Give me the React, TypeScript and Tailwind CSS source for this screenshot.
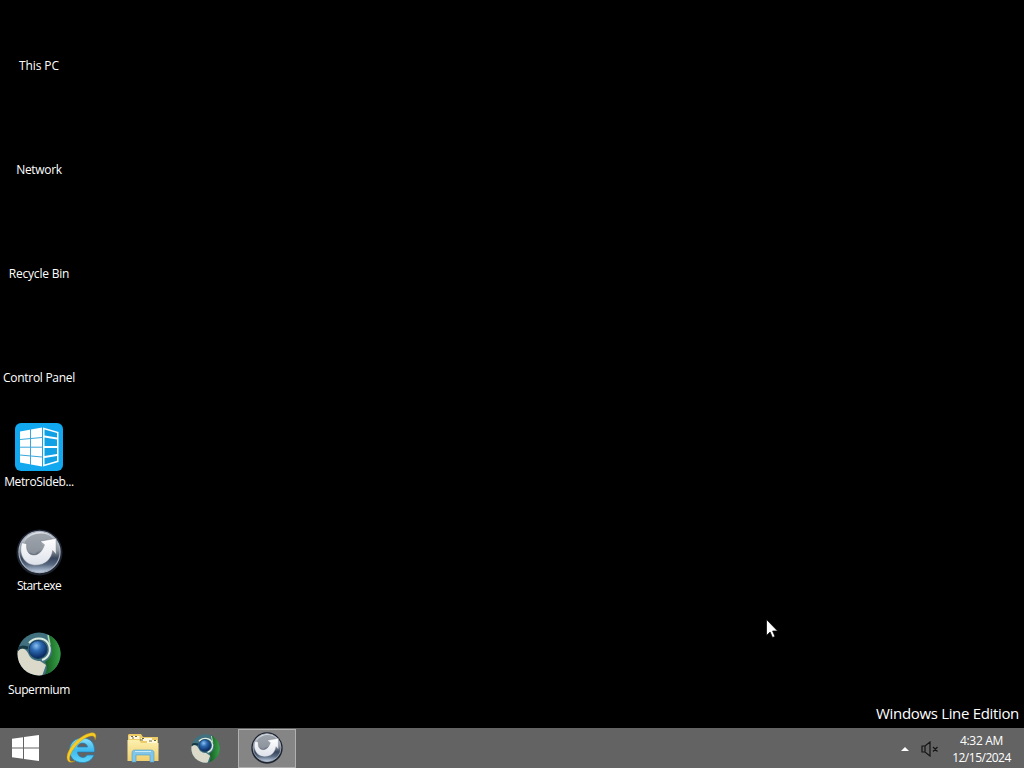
import { ReactNode } from "react";
import clsx from "clsx";

function MetroIcon() {
  return (
    <svg viewBox="0 0 48 48" className="size-12">
      <rect width="48" height="48" rx="6" fill="#12a8f0" />
      <path d="M5 8.500 27 4.500v39L5 39.500z" fill="#fff" />
      <path
        d="M5 16.500 27 14.500M5 24.200h22M5 32 27 34M15.500 6v36"
        stroke="#3aa5d8"
        strokeWidth="1"
      />
      <path
        d="M28 4.500 43.500 9v30L28 43.500z"
        fill="#fff"
      />
      <path
        d="M29.500 6.500 42 10v4.500l-12.500-2zM29.500 14.500 42 16.500v6.500H29.500zM29.500 25H42v6l-12.500 2zM29.500 35 42 33v4.800l-12.500 3.700z"
        fill="#12a0e4"
      />
    </svg>
  );
}

function StartOrb({ className, id }: { className: string; id: string }) {
  return (
    <svg viewBox="0 0 48 48" className={className}>
      <defs>
        <linearGradient id={`${id}-glass`} x1="0" y1="0" x2="0" y2="1">
          <stop offset="0" stopColor="#e3e6ea" />
          <stop offset="0.45" stopColor="#8d949d" />
          <stop offset="0.65" stopColor="#38455c" />
          <stop offset="0.8" stopColor="#56677f" />
          <stop offset="1" stopColor="#c3d2e6" />
        </linearGradient>
        <linearGradient id={`${id}-arrow`} x1="0" y1="0" x2="0" y2="1">
          <stop offset="0" stopColor="#fff" />
          <stop offset="1" stopColor="#dde1ea" />
        </linearGradient>
      </defs>
      <circle cx="24" cy="24" r="23.500" fill="#1d2430" />
      <circle
        cx="24"
        cy="23.500"
        r="21"
        fill={`url(#${id}-glass)`}
        stroke="#a9b2c0"
        strokeWidth="1.200"
      />
      <path d="M9 13C15 3 32 2 38 10L25 13l3 4-9 9-8-3z" fill="#90969f" opacity="0.8" />
      <path
        d="M6 14C2 26 9 37 20 37c10 0 16-6 17.500-15L41 26V9.500L24.500 12.500 29 16c-2 6-5 10-10 10.500C13 27 10 22 11 15z"
        fill={`url(#${id}-arrow)`}
        stroke="#69717e"
        strokeWidth="0.5"
      />
    </svg>
  );
}

function SupermiumIcon({ className, id }: { className: string; id: string }) {
  return (
    <svg viewBox="0 0 44 44" className={className}>
      <defs>
        <radialGradient id={`${id}-eye`} cx="0.4" cy="0.3" r="0.7">
          <stop offset="0" stopColor="#8ac0f2" />
          <stop offset="0.4" stopColor="#2c69b1" />
          <stop offset="1" stopColor="#07265b" />
        </radialGradient>
        <linearGradient id={`${id}-green`}>
          <stop offset="0" stopColor="#14571e" />
          <stop offset="1" stopColor="#37a447" />
        </linearGradient>
        <clipPath id={`${id}-clip`}>
          <circle cx="22" cy="22" r="21.500" />
        </clipPath>
      </defs>
      <g clipPath={`url(#${id}-clip)`}>
        <path d="M0 0h44v44H0z" fill="#41717f" />
        <path d="M0 18c5-3 9-1 11 3 2 6 7 8 12 8l6 4-4 11H0z" fill="#dad9ca" />
        <path
          d="M30 0h14v44H27c3-5 4-9 1-14 7-4 9-11 5-18z"
          fill={`url(#${id}-green)`}
        />
        <path d="M0 18c3-4 7-3 11-2" fill="none" stroke="#173944" strokeWidth="3" />
        <path
          d="M12 11c5-6 15-6 19 0 4 7 1 15-6 17"
          fill="none"
          stroke="#dcebe0"
          strokeWidth="2"
        />
        <path d="M31 3l2 10" stroke="#b4d6ba" strokeWidth="1.500" />
      </g>
      <circle cx="21" cy="17.500" r="9" fill={`url(#${id}-eye)`} stroke="#163a61" />
    </svg>
  );
}

function WindowsLogo() {
  return (
    <svg viewBox="0 0 27 26" className="h-[26px] w-[27px]" fill="#fff">
      <path d="M0 3.700 11 2.200v10.300H0zM12 2 27 0v12.500H12zM0 13.500h11v10.300L0 22.300zM12 13.500h15V26l-15-2z" />
    </svg>
  );
}

function ExplorerE() {
  return (
    <svg viewBox="0 0 32 32" className="size-8">
      <defs>
        <linearGradient id="ie-blue" x1="0" y1="0" x2="0" y2="1">
          <stop offset="0" stopColor="#8be1fa" />
          <stop offset="0.5" stopColor="#3db9ed" />
          <stop offset="1" stopColor="#5fd6fa" />
        </linearGradient>
      </defs>
      <path
        d="M29.500 20H12.500c0 6 8 7 9.500 3h7c-2 5-6 7.500-11.500 7.500C9 30.500 4.500 25 4.500 18S10 6 17.500 6c8 0 12.500 5 12 14zM12.500 15h10c-.5-5-9-5.500-10 0z"
        fill="url(#ie-blue)"
        fillRule="evenodd"
        stroke="#1f7fb8"
        strokeWidth="0.7"
      />
      <path
        d="M3.500 29.500C-1 25 5 14 13 7.500 20 2 28-1 30.300 2c1 1.300.7 3.500-.3 6 .2-3-1-4.500-4-4-5 .8-11 5-15.500 10.500C6 20 3.500 25.500 5 28.500c.7 1.300 3 1.200 5 .3-2.500 1.700-5 2-6.500.7z"
        fill="#f7cd24"
        stroke="#c18b13"
        strokeWidth="0.4"
      />
    </svg>
  );
}

function FolderIcon() {
  return (
    <svg viewBox="0 0 32 30" className="h-[30px] w-8">
      <defs>
        <linearGradient id="folder-front" x1="0" y1="0" x2="0" y2="1">
          <stop offset="0" stopColor="#fcf0ae" />
          <stop offset="1" stopColor="#f0cf6f" />
        </linearGradient>
      </defs>
      <path d="M1 28V2l1-1h12l2 3h15v24z" fill="#edcc68" />
      <path d="M2.500 3h10v3h-10zM14 5h11v3H14zM20 7h10v3H20z" fill="#fff8dc" />
      <path
        d="M4 3.500h2M8 3.500h2M5 5h2M15 5.500h2M13 7h3M22 8h3M27 7.500h2"
        stroke="#6b6841"
      />
      <path d="M.5 28V7H12l2 3h17.500v18z" fill="url(#folder-front)" />
      <path
        d="M5 29v-9c0-2 1-3 3-3h16c2 0 3 1 3 3v9h-4v-7H9v7z"
        fill="#82c5e7"
        stroke="#4f9fca"
        strokeWidth="0.6"
      />
      <path d="M8 18.500h16" stroke="#c8edf9" />
    </svg>
  );
}

function MutedSpeaker() {
  return (
    <svg
      viewBox="0 0 18 16"
      className="h-4 w-[18px]"
      fill="none"
      stroke="#151515"
      strokeWidth="1.200"
    >
      <path d="M1 5h3l5-4v14l-5-4H1zM4 5v6M12 6l4.500 4.500M16.500 6 12 10.500" />
    </svg>
  );
}

const shortcuts: { name: string; label: string; icon?: ReactNode }[] = [
  { name: "This PC", label: "tracking-[-0.1px]" },
  { name: "Network", label: "tracking-[-0.3px]" },
  { name: "Recycle Bin", label: "tracking-[-0.2px]" },
  { name: "Control Panel", label: "tracking-[-0.3px]" },
  { name: "MetroSideb...", label: "tracking-[-0.36px]", icon: <MetroIcon /> },
  {
    name: "Start.exe",
    label: "tracking-[-0.6px]",
    icon: <StartOrb id="desk-orb" className="mt-0.5 size-[47px]" />,
  },
  {
    name: "Supermium",
    label: "tracking-[-0.4px]",
    icon: <SupermiumIcon id="desk-sm" className="mb-0.5 size-11" />,
  },
];

function TaskButton({ children, active }: { children: ReactNode; active?: boolean }) {
  return (
    <div className="flex h-10 w-[62px] items-center justify-center">
      <div
        className={clsx(
          "flex h-[39px] w-[58px] items-center justify-center",
          active && "border border-[#b0b0b0] bg-[#858585]"
        )}
      >
        {children}
      </div>
    </div>
  );
}

function Taskbar() {
  return (
    <div className="flex h-10 shrink-0 items-center bg-[#636363]">
      <div className="flex w-[50px] justify-center">
        <WindowsLogo />
      </div>
      <TaskButton>
        <ExplorerE />
      </TaskButton>
      <TaskButton>
        <FolderIcon />
      </TaskButton>
      <TaskButton>
        <SupermiumIcon id="bar-sm" className="size-[29px]" />
      </TaskButton>
      <TaskButton active>
        <StartOrb id="bar-orb" className="size-8" />
      </TaskButton>
      <div className="ml-auto flex items-center">
        <svg viewBox="0 0 8 4" className="mt-0.5 mr-3 h-1 w-2" fill="#fff">
          <path d="M4 0 8 4H0z" />
        </svg>
        <div className="pt-0.5">
          <MutedSpeaker />
        </div>
        <div className="w-[85px] pt-0.5 text-center text-[12px] leading-[17px]">
          <div className="tracking-[-0.3px]">4:32 AM</div>
          <div className="tracking-[-0.5px]">12/15/2024</div>
        </div>
      </div>
    </div>
  );
}

export default function App() {
  return (
    <div className="relative flex h-screen w-full flex-col overflow-hidden bg-black font-['Open_Sans',sans-serif] text-white select-none">
      <div className="flex min-h-0 flex-1 justify-between">
        <div className="flex w-[78px] flex-col pt-[7px]">
          {shortcuts.map(({ name, label, icon }) => (
            <div key={name} className="flex h-[104px] shrink-0 flex-col items-center">
              <div className="flex size-12 items-center justify-center">{icon}</div>
              <div className={clsx("mt-[3px] text-[12px] leading-4 whitespace-nowrap", label)}>
                {name}
              </div>
            </div>
          ))}
        </div>
        <div className="self-end pr-[5px] pb-[5px] text-[15px] leading-5 tracking-[-0.33px]">
          Windows Line Edition
        </div>
      </div>
      <Taskbar />
      {/* mouse pointer */}
      <svg
        viewBox="0 0 12 19"
        className="absolute top-[619px] left-[766px] h-[19px] w-3"
        fill="#fff"
        stroke="#000"
        strokeWidth="0.7"
      >
        <path d="M.5.5v16l3.600-3.500 2.400 5.500 2.500-1-2.400-5.500h5z" />
      </svg>
    </div>
  );
}
